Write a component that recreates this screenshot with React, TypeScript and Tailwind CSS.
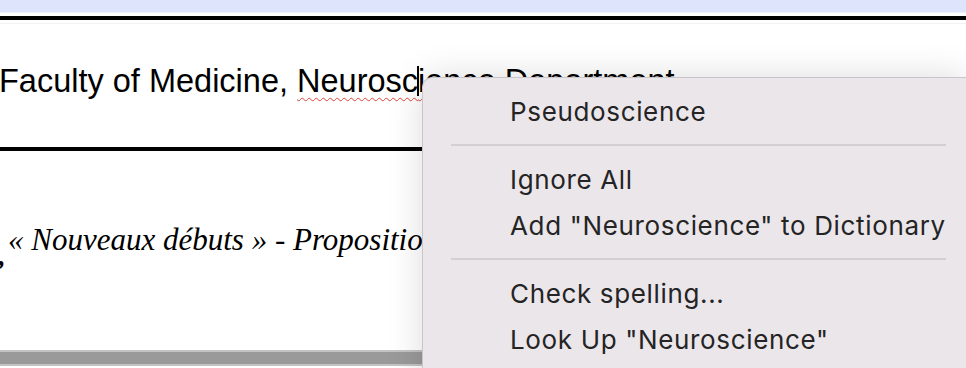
import React from "react";

// Spell-check context menu over a document page
const MENU_FONT = { fontFamily: "Inter, 'Noto Sans', sans-serif" };

function Separator() {
  return (
    <div className="pt-[9px] pb-[11px] pl-[28px] pr-[20px]">
      <div className="h-[2px] bg-[#d3cfd3]" />
    </div>
  );
}

function Item({ label }: { label: string }) {
  return (
    <div className="flex h-[46px] items-center pl-[87px] text-[26px] leading-none tracking-[0.65px] text-[#242424] whitespace-nowrap">
      {label}
    </div>
  );
}

export default function App() {
  return (
    <div className="relative h-[368px] w-[966px] overflow-hidden bg-white">
      {/* Document */}
      <div className="flex flex-col">
        <div className="h-[12px] bg-[#dde4fb]" />
        <div className="h-[4px] bg-white border-t border-[#eef1fd]" />
        <div className="h-[4px] bg-black" />
        <div className="h-[4px] border-b border-[#f2f2f2]" />

        <div
          className="-ml-[1px] pt-[41px] pb-[50px] text-[32.5px] leading-[32px] text-black whitespace-nowrap"
          style={{ fontFamily: "'Liberation Sans', Arial, sans-serif" }}
        >
          Faculty of Medicine,{" "}
          <span className="underline decoration-wavy decoration-[#e0403a] decoration-1 underline-offset-[5px]">
            Neurosc
            <span className="relative inline-block w-0">
              <span className="absolute left-[-1px] top-[-26px] h-[30px] w-[1.5px] bg-black" />
            </span>
            ience
          </span>{" "}
          Department
        </div>

        <div className="h-[4px] bg-black" />

        <div
          className="pl-[8px] pt-[73px] text-[31px] leading-[31px] italic text-black whitespace-nowrap"
          style={{ fontFamily: "'Liberation Serif', 'Times New Roman', serif" }}
        >
          « Nouveaux débuts » - Proposition de projet
        </div>
        <div
          className="-ml-[5px] h-[95px] pt-[1px] text-[28px] font-bold italic leading-[28px] text-black"
          style={{ fontFamily: "'Liberation Serif', 'Times New Roman', serif" }}
        >
          ’
        </div>
        <div className="h-[2px] bg-[#c4c4c4]" />
        <div className="h-[12px] bg-[#9a9a9a]" />
        <div className="h-[2px] bg-[#c4c4c4]" />
      </div>

      {/* Context menu */}
      <div
        className="absolute left-[422px] top-[77px] right-0 -bottom-[40px] rounded-tl-[10px] border-l border-t border-[#c9c5c9] bg-[#ebe6ea] pt-[11px] shadow-[0_0_36px_rgba(0,0,0,0.14)]"
        style={MENU_FONT}
      >
        <Item label="Pseudoscience" />
        <Separator />
        <Item label="Ignore All" />
        <Item label='Add "Neuroscience" to Dictionary' />
        <Separator />
        <Item label="Check spelling..." />
        <Item label='Look Up "Neuroscience"' />
      </div>
    </div>
  );
}
